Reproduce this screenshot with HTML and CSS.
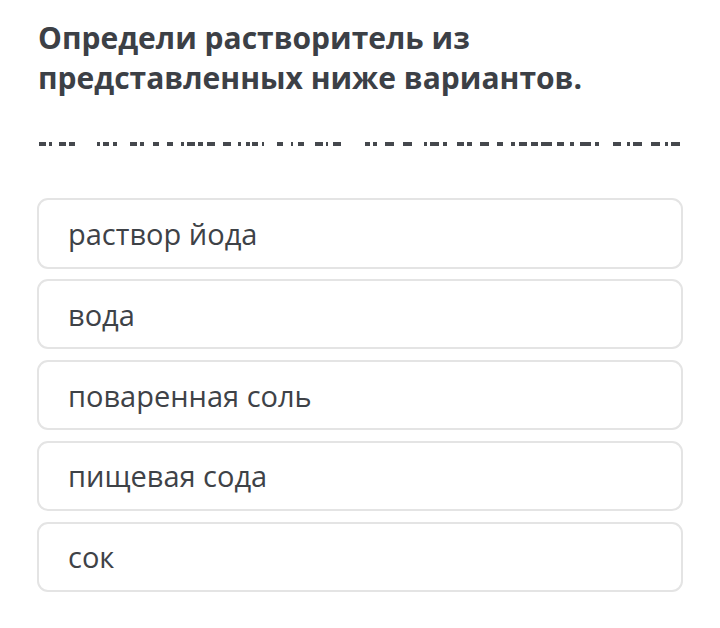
FILE: index.html
```html
<!DOCTYPE html>
<html lang="ru">
<head>
<meta charset="utf-8">
<link rel="stylesheet" href="styles.css">
</head>
<body>
<main class="quiz">
  <h1 class="question">Определи растворитель из представленных ниже вариантов.</h1>
  <svg class="garbled" width="646" height="5" viewBox="0 0 646 5" aria-hidden="true">
    <g fill="#45484d" transform="translate(-37 0)">
      <rect x="39" y="0" width="7" height="4"/><rect x="49" y="0" width="3" height="4"/>
      <rect x="59" y="0" width="7" height="4"/><rect x="69" y="0" width="6" height="4"/>
      <rect x="97" y="0" width="3" height="4"/><rect x="103" y="0" width="6" height="4"/>
      <rect x="113" y="0" width="4" height="4"/><rect x="130" y="0" width="7" height="4"/>
      <rect x="140" y="0" width="4" height="4"/><rect x="153" y="0" width="6" height="4"/>
      <rect x="167" y="0" width="6" height="4"/><rect x="181" y="0" width="3" height="4"/>
      <rect x="187" y="0" width="8" height="4"/><rect x="198" y="0" width="5" height="4"/>
      <rect x="207" y="0" width="8" height="4"/><rect x="223" y="0" width="8" height="4"/>
      <rect x="238" y="0" width="3" height="4"/><rect x="246" y="0" width="4" height="4"/>
      <rect x="252" y="0" width="6" height="4"/>
      <rect x="262" y="0" width="2" height="4"/><rect x="277" y="0" width="6" height="4"/>
      <rect x="291" y="0" width="2" height="4"/><rect x="298" y="0" width="6" height="4"/>
      <rect x="315" y="0" width="8" height="4"/><rect x="326" y="0" width="2" height="4"/>
      <rect x="333" y="0" width="8" height="4"/><rect x="365" y="0" width="5" height="4"/>
      <rect x="373" y="0" width="4" height="4"/><rect x="385" y="0" width="9" height="4"/>
      <rect x="403" y="0" width="9" height="4"/><rect x="424" y="0" width="3" height="4"/>
      <rect x="430" y="0" width="9" height="4"/><rect x="443" y="0" width="4" height="4"/>
      <rect x="457" y="0" width="7" height="4"/><rect x="467" y="0" width="5" height="4"/>
      <rect x="480" y="0" width="9" height="4"/><rect x="497" y="0" width="6" height="4"/>
      <rect x="511" y="0" width="4" height="4"/><rect x="519" y="0" width="8" height="4"/>
      <rect x="531" y="0" width="7" height="4"/><rect x="541" y="0" width="11" height="4"/>
      <rect x="557" y="0" width="7" height="4"/><rect x="570" y="0" width="4" height="4"/>
      <rect x="580" y="0" width="11" height="4"/><rect x="595" y="0" width="4" height="4"/>
      <rect x="613" y="0" width="8" height="4"/><rect x="627" y="0" width="3" height="4"/>
      <rect x="633" y="0" width="9" height="4"/><rect x="651" y="0" width="9" height="4"/>
      <rect x="665" y="0" width="3" height="4"/><rect x="671" y="0" width="9" height="4"/>
    </g>
  </svg>
  <ul class="options">
    <li class="option">раствор йода</li>
    <li class="option">вода</li>
    <li class="option">поваренная соль</li>
    <li class="option">пищевая сода</li>
    <li class="option">сок</li>
  </ul>
</main>
</body>
</html>
```

FILE: styles.css
```css
html, body {
  margin: 0;
  padding: 0;
  background: #ffffff;
}

.quiz {
  padding: 18px 37px 0 37px;
  font-family: "Open Sans", "Noto Sans", sans-serif;
  color: #3c4046;
}

.question {
  margin: 0 0 0 1px;
  font-size: 30px;
  font-weight: 700;
  line-height: 40px;
  max-width: 600px;
}

.garbled {
  display: block;
  margin-top: 44px;
}

.options {
  list-style: none;
  margin: 51px 0 0 0;
  padding: 0;
  display: flex;
  flex-direction: column;
  gap: 10.4px;
}

.option {
  height: 70.5px;
  box-sizing: border-box;
  border: 2px solid #e4e4e4;
  border-radius: 11px;
  padding: 0 0 0 29px;
  display: flex;
  align-items: center;
  font-size: 29px;
  color: #3e4247;
}
```
